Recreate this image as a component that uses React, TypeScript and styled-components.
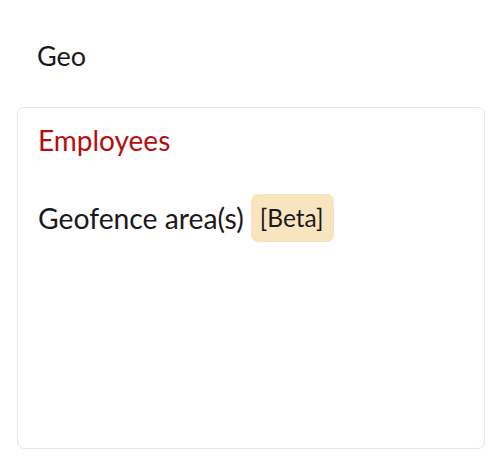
import * as React from "react"
import styled, { createGlobalStyle } from "styled-components"

const GlobalStyle = createGlobalStyle`
  body {
    margin: 0;
    background: #ffffff;
    font-family: Lato, "Noto Sans", sans-serif;
    color: #1a1a1a;
  }
`

const Page = styled.div`
  padding: 38px 15px 14px 17px;
  display: flex;
  flex-direction: column;
`

const Title = styled.h2`
  margin: 0 0 0 20px;
  font-size: 27px;
  font-weight: 400;
  line-height: 36px;
`

const Card = styled.section`
  margin-top: 33px;
  height: 342px;
  border: 1px solid #e6e6e6;
  border-radius: 7px;
  padding: 14px 20px;
  box-sizing: border-box;
`

const CardTitle = styled.h3`
  margin: 0;
  font-size: 28px;
  font-weight: 400;
  line-height: 36px;
  color: #b50d0d;
`

const Row = styled.div`
  margin-top: 36px;
  display: flex;
  align-items: center;
  gap: 7px;
  font-size: 28.3px;
`

const Badge = styled.span`
  background: #f8e5c0;
  border-radius: 7px;
  padding: 8px 10px 8px 9px;
  font-size: 24.5px;
  line-height: 32px;
`

export default function App() {
  return (
    <>
      <GlobalStyle />
      <Page>
        <Title>Geo</Title>
        <Card>
          <CardTitle>Employees</CardTitle>
          <Row>
            <span>Geofence area(s)</span>
            <Badge>[Beta]</Badge>
          </Row>
        </Card>
      </Page>
    </>
  )
}
